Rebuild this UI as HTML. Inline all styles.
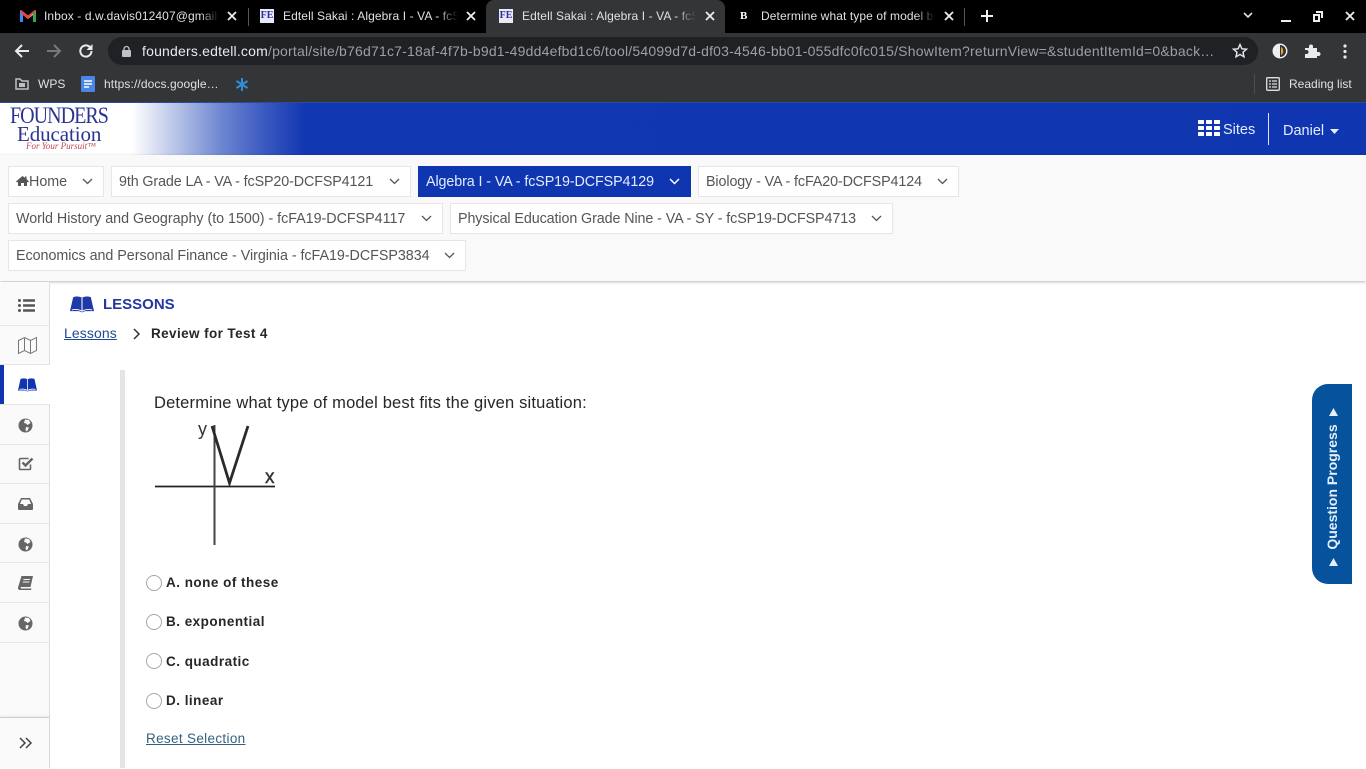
<!DOCTYPE html>
<html><head><meta charset="utf-8"><style>
html,body{margin:0;padding:0;width:1366px;height:768px;overflow:hidden;background:#fff;font-family:"Liberation Sans",sans-serif}
.a{position:absolute;white-space:nowrap}
svg{position:absolute;overflow:visible}
.tab{font-size:12px;color:#dfe1e5;top:9px;height:16px;line-height:15px;overflow:hidden;letter-spacing:.1px}
.pill{position:absolute;height:29px;line-height:30px;background:#fff;border:1px solid #e6e6e6;font-size:14.3px;color:#555;padding-left:7px;box-sizing:content-box;white-space:nowrap}
.pill svg{top:11px}
.side{position:absolute;left:0;width:49px;height:1px;background:#e6e6e6}
.opt{position:absolute;left:166px;font-size:13.5px;font-weight:bold;color:#262626;letter-spacing:.48px;white-space:nowrap}
.radio{position:absolute;left:146px;width:14px;height:14px;border:1px solid #a6a6a6;border-radius:50%;background:#fff}
</style></head><body>
<div class="a" style="left:0;top:0;width:1366px;height:33px;background:#000"></div>
<div class="a" style="left:0;top:33px;width:1366px;height:69px;background:#343537"></div>
<div class="a" style="left:486px;top:0;width:239px;height:33px;background:#343537;border-radius:8px 8px 0 0"></div>

<!-- tabs -->
<svg style="left:20px;top:10px" width="16" height="12" viewBox="0 0 16 12"><path d="M0 1v11h3V5l5 4 5-4v7h3V1l-1-1-7 5.500L1 0z" fill="#fff"/><path d="M0 1v11h3V5z" fill="#4285f4"/><path d="M13 12h3V1l-3 2z" fill="#34a853"/><path d="M1 0l7 5.500L15 0l1 1-3 3-5 5-5-4-3-4z" fill="#ea4335"/></svg>
<div class="a tab" style="left:44px;width:174px">Inbox - d.w.davis012407@gmail</div>
<div class="a" style="left:200px;top:8px;width:19px;height:18px;background:linear-gradient(90deg,transparent,#000)"></div>
<svg style="left:227px;top:11px" width="10" height="10"><path d="M1 1l8 8M9 1l-8 8" stroke="#eee" stroke-width="1.800"/></svg>
<div class="a" style="left:248px;top:8px;width:1px;height:18px;background:#555"></div>

<div class="a" style="left:260px;top:9px;width:14px;height:14px;background:#e8e8f8;color:#2b2f9e;font:bold 10px/14px 'Liberation Serif',serif;text-align:center">FE</div>
<div class="a tab" style="left:283px;width:175px">Edtell Sakai : Algebra I - VA - fcSP19</div>
<div class="a" style="left:438px;top:8px;width:20px;height:18px;background:linear-gradient(90deg,transparent,#000)"></div>
<svg style="left:466px;top:11px" width="10" height="10"><path d="M1 1l8 8M9 1l-8 8" stroke="#eee" stroke-width="1.800"/></svg>

<div class="a" style="left:499px;top:9px;width:14px;height:14px;background:#e8e8f8;color:#2b2f9e;font:bold 10px/14px 'Liberation Serif',serif;text-align:center">FE</div>
<div class="a tab" style="left:522px;width:174px">Edtell Sakai : Algebra I - VA - fcSP19</div>
<div class="a" style="left:676px;top:8px;width:20px;height:18px;background:linear-gradient(90deg,transparent,#343537)"></div>
<svg style="left:705px;top:11px" width="10" height="10"><path d="M1 1l8 8M9 1l-8 8" stroke="#eee" stroke-width="1.800"/></svg>

<div class="a" style="left:740px;top:9px;width:10px;color:#fff;font:bold 11px/14px 'Liberation Serif',serif">B</div>
<div class="a tab" style="left:761px;width:174px">Determine what type of model best fits</div>
<div class="a" style="left:915px;top:8px;width:20px;height:18px;background:linear-gradient(90deg,transparent,#000)"></div>
<svg style="left:944px;top:11px" width="10" height="10"><path d="M1 1l8 8M9 1l-8 8" stroke="#eee" stroke-width="1.800"/></svg>
<div class="a" style="left:964px;top:8px;width:1px;height:18px;background:#555"></div>
<svg style="left:981px;top:10px" width="12" height="12"><path d="M6 0v12M0 6h12" stroke="#eee" stroke-width="2"/></svg>
<svg style="left:1243px;top:12px" width="10" height="7"><path d="M1 1l4 4 4-4" fill="none" stroke="#dfe1e5" stroke-width="1.600"/></svg>
<div class="a" style="left:1281px;top:20px;width:10px;height:2px;background:#eee"></div>
<svg style="left:1313px;top:11px" width="10" height="11"><path d="M3 1h6v6M1 4h5v6H1z" fill="none" stroke="#eee" stroke-width="2"/></svg>
<svg style="left:1345px;top:11px" width="10" height="10"><path d="M1 1l8 8M9 1l-8 8" stroke="#eee" stroke-width="1.800"/></svg>

<!-- toolbar -->
<svg style="left:14px;top:44px" width="16" height="14"><path d="M15 7H2M8 1L2 7l6 6" fill="none" stroke="#e8eaed" stroke-width="2"/></svg>
<svg style="left:46px;top:44px" width="16" height="14"><path d="M1 7h13M8 1l6 6-6 6" fill="none" stroke="#77797c" stroke-width="2"/></svg>
<svg style="left:78px;top:43px" width="16" height="16" viewBox="0 0 16 16"><path d="M13.500 8A5.600 5.600 0 1 1 11.800 4" fill="none" stroke="#e8eaed" stroke-width="2"/><path d="M14.500 1v6h-6z" fill="#e8eaed"/></svg>
<div class="a" style="left:108px;top:37px;width:1150px;height:28px;background:#202124;border-radius:14px"></div>
<svg style="left:122px;top:46px" width="9" height="11"><rect x="0" y="4" width="9" height="7" rx="1" fill="#bdc1c6"/><path d="M2 5V3a2.500 2.500 0 0 1 5 0v2" fill="none" stroke="#bdc1c6" stroke-width="1.300"/></svg>
<div class="a" style="left:142px;top:43px;font-size:14px;line-height:17px;color:#e8eaed;letter-spacing:.2px;width:1072px;overflow:hidden">founders.edtell.com<span style="color:#9aa0a6">/portal/site/b76d71c7-18af-4f7b-b9d1-49dd4efbd1c6/tool/54099d7d-df03-4546-bb01-055dfc0fc015/ShowItem?returnView=&amp;studentItemId=0&amp;back…</span></div>
<svg style="left:1232px;top:43px" width="16" height="16" viewBox="0 0 16 16"><path d="M8 1.500l1.900 4.300 4.600.4-3.500 3 1 4.600L8 11.400l-4 2.400 1-4.600-3.500-3 4.600-.4z" fill="none" stroke="#e8eaed" stroke-width="1.400"/></svg>
<svg style="left:1272px;top:43px" width="16" height="16" viewBox="0 0 16 16"><circle cx="8" cy="8" r="7.500" fill="#eee"/><path d="M8 2a6 6 0 0 1 0 12z" fill="#333"/><path d="M9 4c3 1 3 7 0 8z" fill="#d9a441"/></svg>
<svg style="left:1304px;top:43px" width="16" height="16" viewBox="0 0 16 16"><path d="M1 5h4V3.500a2 2 0 0 1 4 0V5h4v4h1.500a2 2 0 0 1 0 4H13v2H1v-4h1.500a2 2 0 0 0 0-4H1z" fill="#e8eaed"/></svg>
<svg style="left:1343px;top:44px" width="4" height="16"><circle cx="2" cy="2" r="1.600" fill="#e8eaed"/><circle cx="2" cy="7.500" r="1.600" fill="#e8eaed"/><circle cx="2" cy="13" r="1.600" fill="#e8eaed"/></svg>

<!-- bookmarks -->
<svg style="left:15px;top:78px" width="14" height="12"><path d="M1 1h4l2 2h6v8H1z" fill="none" stroke="#bdc1c6" stroke-width="1.500"/><rect x="4" y="5" width="6" height="4" fill="#bdc1c6"/></svg>
<div class="a" style="left:38px;top:77px;font-size:12px;line-height:14px;color:#dfe1e5">WPS</div>
<svg style="left:81px;top:76px" width="14" height="16"><rect width="14" height="16" rx="1.500" fill="#4a86e8"/><path d="M3 5h8M3 8h8M3 11h5" stroke="#fff" stroke-width="1.400"/></svg>
<div class="a" style="left:104px;top:77px;font-size:12px;line-height:14px;color:#dfe1e5;letter-spacing:.1px">https://docs.google…</div>
<svg style="left:236px;top:78px" width="12" height="13"><path d="M6 0v13M.5 3l11 7M11.500 3L.5 10" stroke="#2f8fd8" stroke-width="2"/></svg>
<div class="a" style="left:1254px;top:74px;width:1px;height:20px;background:#4c4d4f"></div>
<svg style="left:1266px;top:77px" width="14" height="14"><rect x=".7" y=".7" width="12.600" height="12.600" rx="1" fill="none" stroke="#dfe1e5" stroke-width="1.300"/><path d="M3 4h2M6 4h5M3 7h2M6 7h5M3 10h2M6 10h5" stroke="#dfe1e5" stroke-width="1.200"/></svg>
<div class="a" style="left:1289px;top:77px;font-size:12px;line-height:14px;color:#dfe1e5">Reading list</div>

<!-- header -->
<div class="a" style="left:0;top:102px;width:1366px;height:1px;background:#2a4a9a"></div>
<div class="a" style="left:0;top:103px;width:1366px;height:52px;background:linear-gradient(90deg,#fff 0,#fff 132px,#b4c1e6 178px,#6f88d2 220px,#3a58c0 265px,#1237b2 305px,#0f36b0 100%)"></div>
<div class="a" style="left:10px;top:105px;font:23px/22px 'Liberation Serif',serif;color:#2b3590;letter-spacing:-1.100px;transform:scaleX(.87);transform-origin:0 0">FOUNDERS</div>
<div class="a" style="left:17px;top:123px;font:21px/22px 'Liberation Serif',serif;color:#2b3590;letter-spacing:-.1px">Education</div>
<div class="a" style="left:26px;top:141px;font:italic 9px/11px 'Liberation Serif',serif;color:#c0464f">For Your Pursuit™</div>
<svg style="left:1198px;top:120px" width="22" height="16"><g fill="#fff"><rect width="6" height="4" rx=".6"/><rect x="8" width="6" height="4" rx=".6"/><rect x="16" width="6" height="4" rx=".6"/><rect y="6" width="6" height="4" rx=".6"/><rect x="8" y="6" width="6" height="4" rx=".6"/><rect x="16" y="6" width="6" height="4" rx=".6"/><rect y="12" width="6" height="4" rx=".6"/><rect x="8" y="12" width="6" height="4" rx=".6"/><rect x="16" y="12" width="6" height="4" rx=".6"/></g></svg>
<div class="a" style="left:1223px;top:122px;font-size:14.500px;line-height:17px;color:#e4ecff">Sites</div>
<div class="a" style="left:1268px;top:113px;width:1px;height:32px;background:#dfe6fa"></div>
<div class="a" style="left:1283px;top:123px;font-size:14.500px;line-height:17px;color:#e4ecff">Daniel</div>
<svg style="left:1330px;top:129px" width="9" height="5"><path d="M0 0h9L4.500 5z" fill="#e4ecff"/></svg>

<!-- nav -->
<div class="a" style="left:0;top:155px;width:1366px;height:126px;background:#f9f9f9;box-shadow:0 1px 3px rgba(0,0,0,.28)"></div>
<div class="pill" style="left:8px;top:166px;width:87px">
<svg style="left:7px;top:9px" width="13" height="10" viewBox="0 0 13 10"><path d="M6.500 0L0 5.500l1 1 1-.8V10h3V7h3v3h3V5.700l1 .8 1-1L10.500 3V.5H9v1.200z" fill="#555"/></svg><span style="margin-left:13px">Home</span>
<svg style="left:73px" width="11" height="7"><path d="M1 1l4.500 4.500L10 1" fill="none" stroke="#555" stroke-width="1.300"/></svg></div>
<div class="pill" style="left:111px;top:166px;width:291px;letter-spacing:-.11px">9th Grade LA - VA - fcSP20-DCFSP4121
<svg style="left:277px" width="11" height="7"><path d="M1 1l4.500 4.500L10 1" fill="none" stroke="#555" stroke-width="1.300"/></svg></div>
<div class="pill" style="left:418px;top:166px;width:264px;background:#0f36b0;border-color:#0f36b0;color:#e4ecff;letter-spacing:-.09px">Algebra I - VA - fcSP19-DCFSP4129
<svg style="left:250px" width="11" height="7"><path d="M1 1l4.500 4.500L10 1" fill="none" stroke="#fff" stroke-width="1.500"/></svg></div>
<div class="pill" style="left:698px;top:166px;width:252px;letter-spacing:-.1px">Biology - VA - fcFA20-DCFSP4124
<svg style="left:238px" width="11" height="7"><path d="M1 1l4.500 4.500L10 1" fill="none" stroke="#555" stroke-width="1.300"/></svg></div>
<div class="pill" style="left:8px;top:203px;width:426px;letter-spacing:-.02px">World History and Geography (to 1500) - fcFA19-DCFSP4117
<svg style="left:412px" width="11" height="7"><path d="M1 1l4.500 4.500L10 1" fill="none" stroke="#555" stroke-width="1.300"/></svg></div>
<div class="pill" style="left:450px;top:203px;width:434px;letter-spacing:-.09px">Physical Education Grade Nine - VA - SY - fcSP19-DCFSP4713
<svg style="left:420px" width="11" height="7"><path d="M1 1l4.500 4.500L10 1" fill="none" stroke="#555" stroke-width="1.300"/></svg></div>
<div class="pill" style="left:8px;top:240px;width:449px;letter-spacing:-.03px">Economics and Personal Finance - Virginia - fcFA19-DCFSP3834
<svg style="left:435px" width="11" height="7"><path d="M1 1l4.500 4.500L10 1" fill="none" stroke="#555" stroke-width="1.300"/></svg></div>

<!-- sidebar -->
<div class="a" style="left:0;top:282px;width:49px;height:486px;background:#fafafa;border-right:1px solid #dedede"></div>
<div class="side" style="top:325px"></div><div class="side" style="top:364px"></div><div class="side" style="top:404px"></div><div class="side" style="top:444px"></div><div class="side" style="top:483px"></div><div class="side" style="top:523px"></div><div class="side" style="top:562px"></div><div class="side" style="top:602px"></div><div class="side" style="top:642px"></div>
<div class="a" style="left:0;top:365px;width:50px;height:39px;background:#fff"></div>
<div class="a" style="left:0;top:365px;width:4px;height:39px;background:#0f36b0"></div>
<svg style="left:18px;top:299px" width="17" height="13"><g fill="#555"><circle cx="1.500" cy="1.500" r="1.500"/><circle cx="1.500" cy="6.500" r="1.500"/><circle cx="1.500" cy="11.500" r="1.500"/><rect x="5" y=".3" width="12" height="2.400" rx=".5"/><rect x="5" y="5.300" width="12" height="2.400" rx=".5"/><rect x="5" y="10.300" width="12" height="2.400" rx=".5"/></g></svg>
<svg style="left:18px;top:337px" width="19" height="17" viewBox="0 0 19 17"><path d="M.5 3.500l6-3 6 3 6-3v13l-6 3-6-3-6 3zM6.500.5v13M12.500 3.500v13" fill="none" stroke="#777" stroke-width="1"/></svg>
<svg style="left:18px;top:378px" width="19" height="14" viewBox="0 0 19 14"><path d="M2.500 1C5 0 8 .3 9.500 1.500 11 .3 14 0 16.500 1L19 12.500h-7l-2.500 1-2.500-1H0z" fill="#0f36b0"/><path d="M9.500 1.500v11M1.500 11.500C4 10.800 7 11 9.500 12.500 12 11 15 10.800 17.500 11.500" fill="none" stroke="#fff" stroke-width=".8"/></svg>
<svg style="left:18px;top:418px" width="15" height="15" viewBox="0 0 15 15"><circle cx="7.500" cy="7.500" r="7" fill="#666"/><path d="M7 1.500l4 .5 1.500 3-3 2-1.500-1.500-2-.5zM8 9l3 .5-2 4-1.500-1.500z" fill="#fafafa"/></svg>
<svg style="left:18px;top:456px" width="16" height="15" viewBox="0 0 16 15"><path d="M12.500 8.500v4a1 1 0 0 1-1 1h-9a1 1 0 0 1-1-1v-9a1 1 0 0 1 1-1h8" fill="none" stroke="#666" stroke-width="1.600"/><path d="M4.500 6.500l3 3L14.500 2.500" fill="none" stroke="#666" stroke-width="2.400"/></svg>
<svg style="left:18px;top:498px" width="15" height="12" viewBox="0 0 15 12"><path d="M3 0h9l3 6v5a1 1 0 0 1-1 1H1a1 1 0 0 1-1-1V6zM3.800 1.500L2 6h3l1 2h3l1-2h3l-1.800-4.500z" fill="#666" fill-rule="evenodd"/></svg>
<svg style="left:18px;top:537px" width="15" height="15" viewBox="0 0 15 15"><circle cx="7.500" cy="7.500" r="7" fill="#666"/><path d="M7 1.500l4 .5 1.500 3-3 2-1.500-1.500-2-.5zM8 9l3 .5-2 4-1.500-1.500z" fill="#fafafa"/></svg>
<svg style="left:18px;top:576px" width="15" height="14" viewBox="0 0 15 14"><path d="M3.500 0H15l-2.500 11H3a1 1 0 0 0 0 1.500h10.500L13 14H2a2 2 0 0 1-2-2.500zM5.500 3l-.2 1h6.500l.2-1zM5 5.500l-.2 1h6.500l.2-1z" fill="#666" fill-rule="evenodd"/></svg>
<svg style="left:18px;top:616px" width="15" height="15" viewBox="0 0 15 15"><circle cx="7.500" cy="7.500" r="7" fill="#666"/><path d="M7 1.500l4 .5 1.500 3-3 2-1.500-1.500-2-.5zM8 9l3 .5-2 4-1.500-1.500z" fill="#fafafa"/></svg>
<div class="a" style="left:0;top:717px;width:49px;height:51px;border-top:1px solid #cfcfcf;box-shadow:0 -1px 2px rgba(0,0,0,.08)"></div>
<svg style="left:19px;top:737px" width="13" height="12"><path d="M1 1l5 5-5 5M7 1l5 5-5 5" fill="none" stroke="#444" stroke-width="1.500"/></svg>

<!-- heading -->
<svg style="left:70px;top:296px" width="24" height="17" viewBox="0 0 19 14" preserveAspectRatio="none"><path d="M2.500 1C5 0 8 .3 9.500 1.500 11 .3 14 0 16.500 1L19 12.500h-7l-2.500 1-2.500-1H0z" fill="#1f3aa8"/><path d="M9.500 1.500v11M1.500 11.500C4 10.800 7 11 9.500 12.500 12 11 15 10.800 17.500 11.500" fill="none" stroke="#fff" stroke-width=".8"/></svg>
<div class="a" style="left:103px;top:296px;font-size:15px;line-height:18px;font-weight:bold;color:#2337a0">LESSONS</div>
<div class="a" style="left:64px;top:325px;font-size:14px;line-height:17px;color:#1f4a8c;text-decoration:underline;letter-spacing:.1px">Lessons</div>
<svg style="left:133px;top:328px" width="8" height="12"><path d="M1 1l5 5-5 5" fill="none" stroke="#333" stroke-width="1.500"/></svg>
<div class="a" style="left:151px;top:325px;font-size:13.500px;line-height:17px;font-weight:bold;color:#262626;letter-spacing:.4px">Review for Test 4</div>

<!-- content -->
<div class="a" style="left:120px;top:370px;width:5px;height:398px;background:#e4e4e4"></div>
<div class="a" style="left:154px;top:394px;font-size:16.500px;line-height:19px;color:#262626;letter-spacing:.17px">Determine what type of model best fits the given situation:</div>
<svg style="left:150px;top:420px" width="130" height="130">
<path d="M5 66.500H125" stroke="#222" stroke-width="1.800"/>
<path d="M64.500 5V125" stroke="#444" stroke-width="2"/>
<path d="M62 6L79.500 63 98 6" fill="none" stroke="#2a2a2a" stroke-width="2.800"/>
<text x="48" y="15" font-family="Liberation Sans" font-size="18" fill="#333">y</text>
<text x="115" y="63" font-family="Liberation Sans" font-size="19" fill="#333" stroke="#333" stroke-width=".4">x</text>
</svg>

<div class="radio" style="top:575px"></div><div class="opt" style="top:575px">A. none of these</div>
<div class="radio" style="top:614px"></div><div class="opt" style="top:614px">B. exponential</div>
<div class="radio" style="top:653px"></div><div class="opt" style="top:654px">C. quadratic</div>
<div class="radio" style="top:693px"></div><div class="opt" style="top:693px">D. linear</div>
<div class="a" style="left:146px;top:731px;font-size:13.500px;line-height:16px;color:#33607f;text-decoration:underline;letter-spacing:.33px">Reset Selection</div>

<!-- question progress -->
<div class="a" style="left:1312px;top:384px;width:40px;height:200px;background:#07529c;border-radius:16px 0 0 16px"></div>
<svg style="left:1329px;top:408px" width="9" height="8"><path d="M4.500 0L9 8H0z" fill="#e4effa"/></svg>
<div class="a" style="left:1232px;top:479px;width:200px;height:16px;line-height:16px;text-align:center;color:#e4effa;font-size:14px;font-weight:bold;transform:rotate(-90deg)">Question Progress</div>
<svg style="left:1329px;top:558px" width="9" height="8"><path d="M4.500 0L9 8H0z" fill="#e4effa"/></svg>
</body></html>
